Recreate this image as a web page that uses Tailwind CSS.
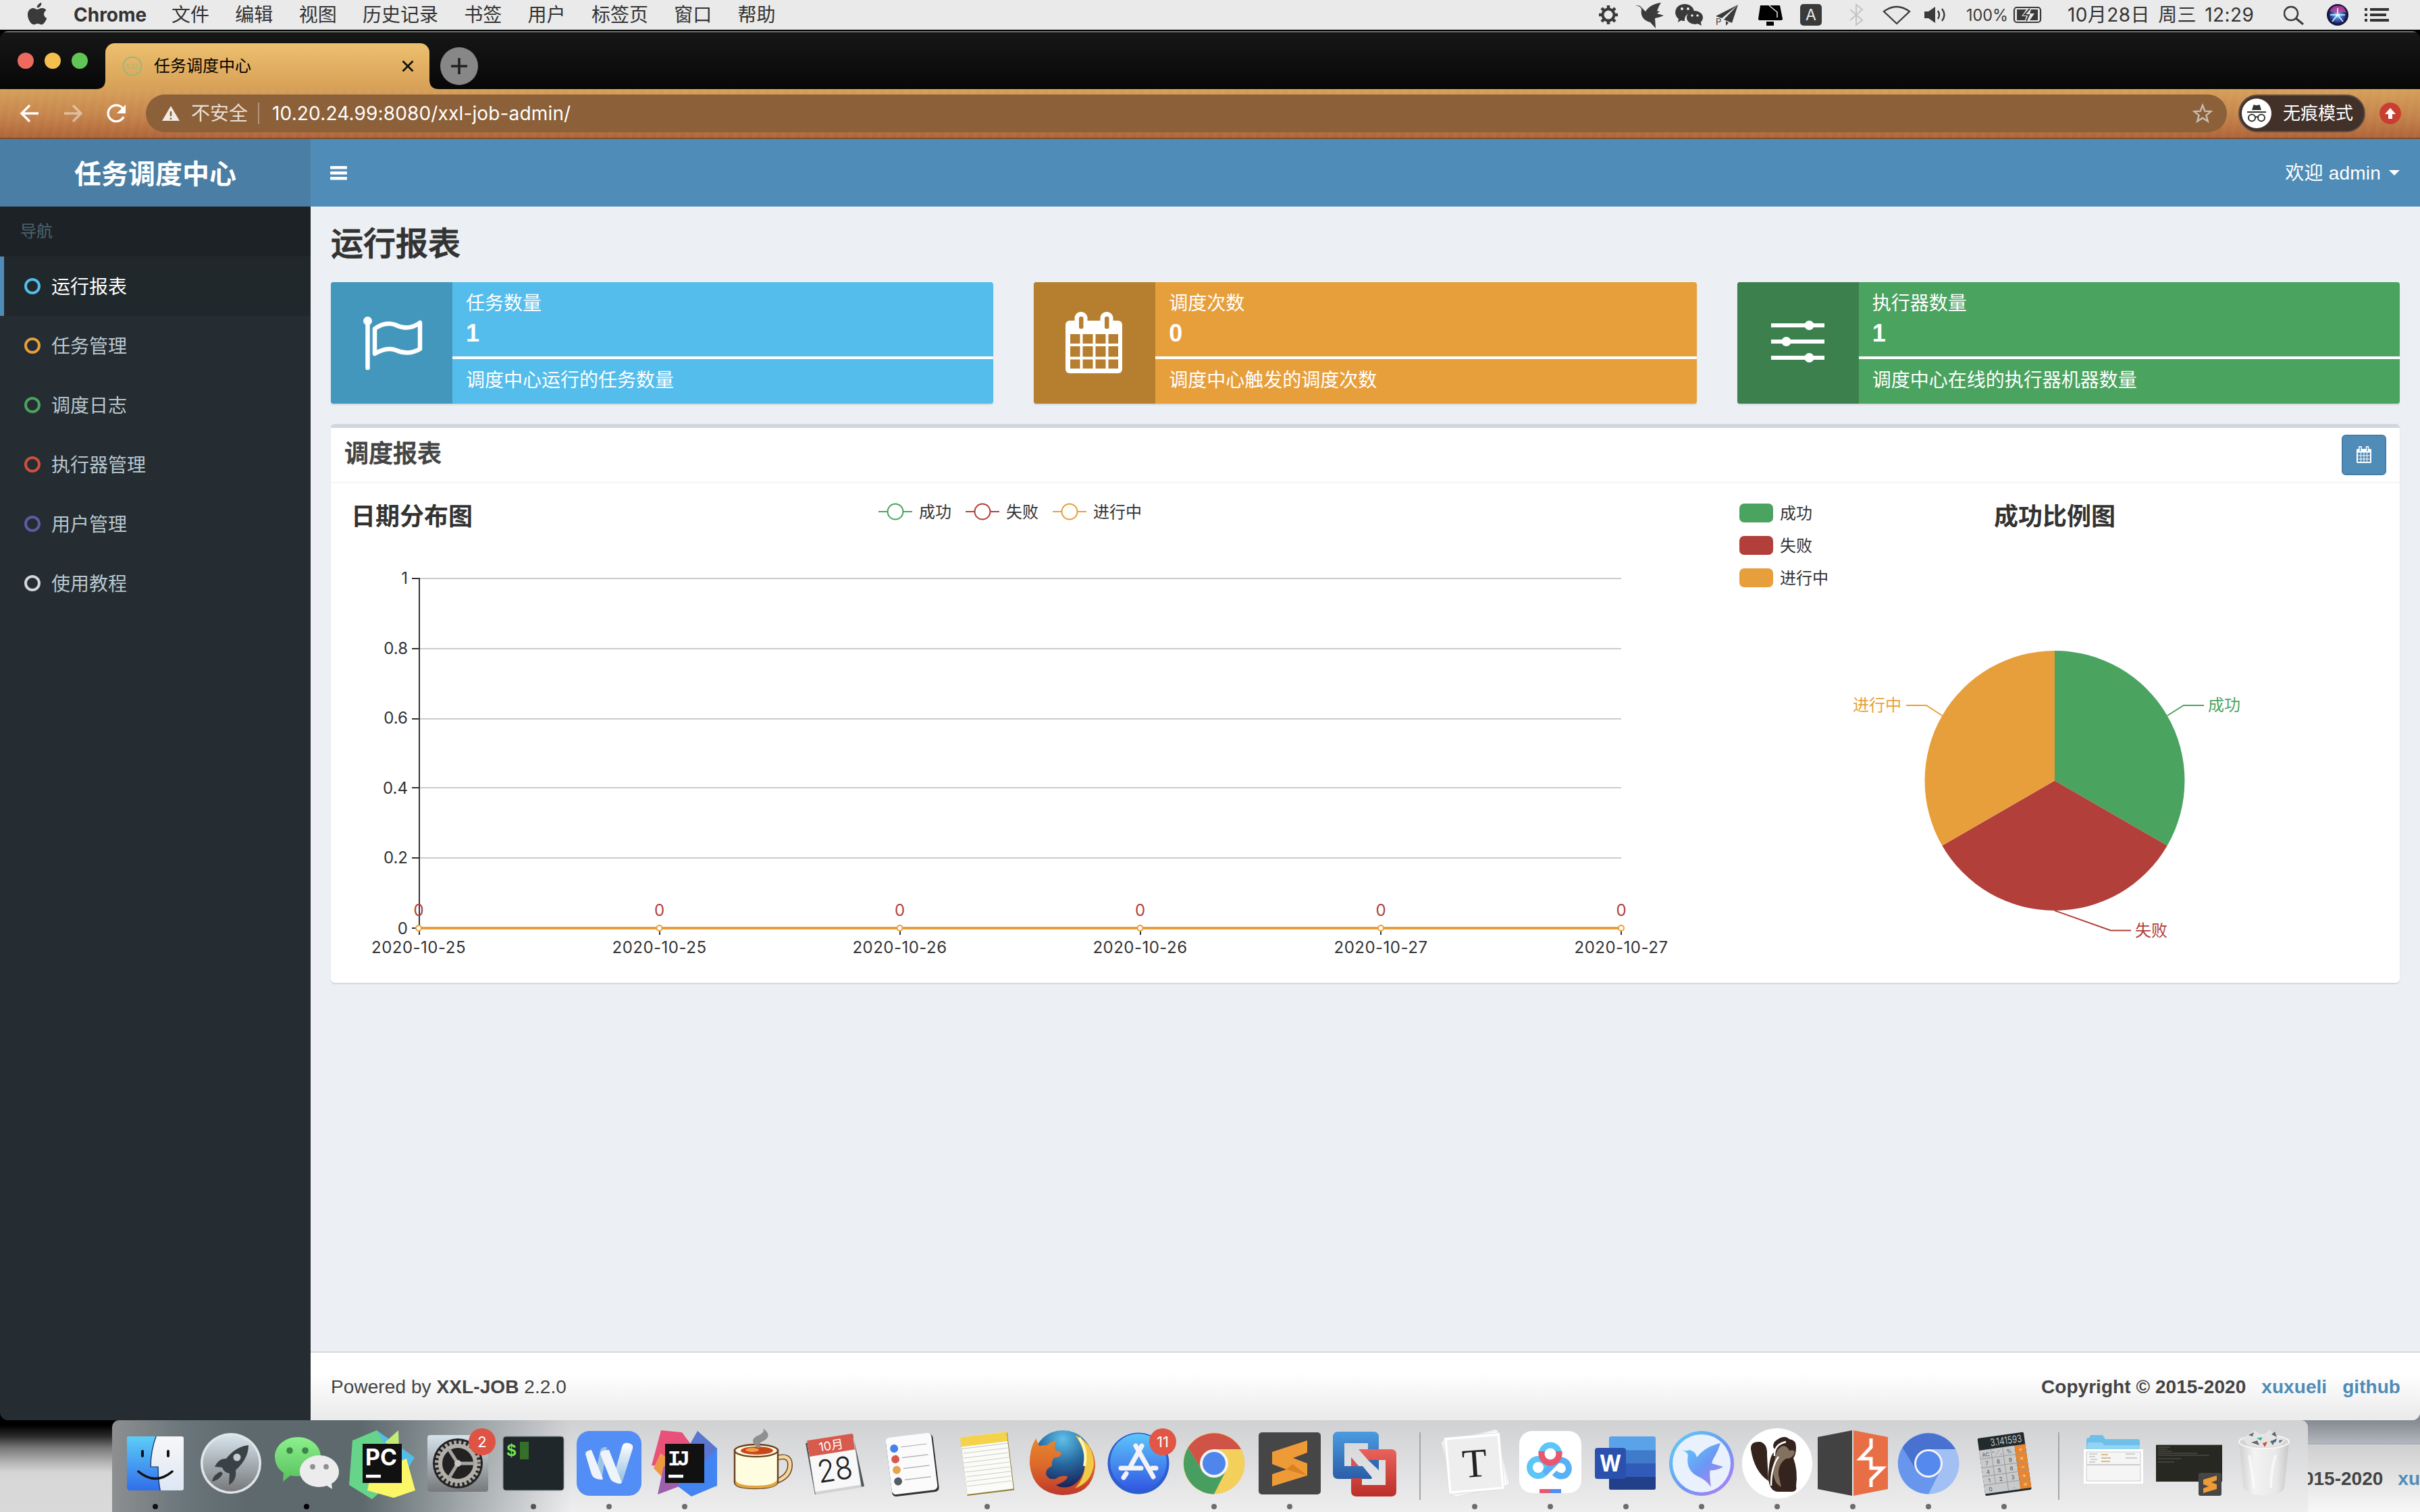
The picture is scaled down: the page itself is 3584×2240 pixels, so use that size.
<!DOCTYPE html>
<html lang="zh-CN">
<head>
<meta charset="utf-8">
<title>任务调度中心</title>
<script src="https://cdn.jsdelivr.net/npm/@tailwindcss/browser@4"></script>
</head>
<body class="m-0">
<div class="relative w-[3584px] h-[2240px] overflow-hidden flex flex-col bg-black font-['Liberation_Sans','Noto_Sans_CJK_SC',sans-serif] text-[28px] leading-[40px]">

  <!-- Desktop visible under the browser window -->
  <div class="absolute left-0 right-0 bottom-0 h-[150px] flex justify-between bg-[#dcdcdc]">
    <div class="w-[400px] h-full bg-[linear-gradient(180deg,#000_0,#000_22px,#2c2c2c_38px,#777_55px,#b8b8b8_78px,#d6d6d6_92px,#dadada_150px)]"></div>
    <div class="w-[400px] h-full flex flex-col">
      <div class="h-[48px] bg-[linear-gradient(180deg,#7d8087,#8c9097_20px,#b3b6bc)]"></div>
      <div class="h-[2px] bg-[#a9adb6]"></div>
      <div class="flex-1 pt-[2px] flex items-center justify-end bg-[linear-gradient(180deg,#cfcfcf,#f8f8f8)] font-bold text-[#444] whitespace-nowrap">
        <span class="mr-[22px]">2015-2020</span><span class="text-[#4f8bb7]">xu</span>
      </div>
    </div>
  </div>

  <!-- macOS menu bar -->
  <header class="relative h-[44px] shrink-0 flex items-center bg-[#eaeaea] text-[#333] text-[28px] font-['Inter','Noto_Sans_CJK_SC',sans-serif] whitespace-nowrap">
    <svg class="ml-[40px] w-[30px] h-[36px]" viewBox="0 0 30 36"><path fill="#3a3a3a" d="M15 10c2 0 4-2 7.500-2 2.500 0 4.600 1.200 6 3.200-5 3-4.300 9.600.8 11.900C28 27 24.700 32.500 21.500 32.500c-2.300 0-3-1.400-5.700-1.400s-3.500 1.400-5.600 1.400C6 32.500 1 25 1 17.800 1 11.500 5 8 9 8c2.600 0 4.500 2 6 2zM14.800 7.600C14.500 4 17.800.6 21.300 0 21.800 4 18.500 7.600 14.800 7.600z"/></svg>
    <span class="ml-[39px] w-[145px] font-bold text-[28px]">Chrome</span>
    <nav class="flex gap-[38.300px] font-normal">
      <span>文件</span><span>编辑</span><span>视图</span><span>历史记录</span><span>书签</span><span>用户</span><span>标签页</span><span>窗口</span><span>帮助</span>
    </nav>
    <svg class="ml-auto w-[664px] h-[44px] shrink-0" viewBox="2360 0 664 44" fill="#3a3a3a">
      <circle cx="2382" cy="22" r="8.500" fill="none" stroke="#3a3a3a" stroke-width="4"/>
      <g stroke="#3a3a3a" stroke-width="4.500"><path d="M2382 8v5M2382 31v5M2368 22h5M2391 22h5M2372 12l3.500 3.500M2388.500 28.500l3.500 3.500M2392 12l-3.500 3.500M2375.500 28.500l-3.500 3.500"/></g>
      <path d="M2422 8c4 0 6 0 8 2l7 7c4-7 13-12 23-13-3 4-4 8-6 12l4 1-4 3 10 3c-4 2-9 3-13 4l1 15-8-9c-9-2-15-9-13-19-1-4-4-5-9-6z"/>
      <path d="M2495 6c8 0 14 5 14 12-8 0-15 5-14 13-2 0-4 0-5-1l-5 3 1-5c-9-7-5-22 9-22z"/><ellipse cx="2510" cy="26" rx="12" ry="10"/><path d="M2512 34l8 4-2-8z"/>
      <g fill="#eaeaea"><circle cx="2491" cy="13" r="2"/><circle cx="2500" cy="13" r="2"/><circle cx="2506" cy="23" r="1.800"/><circle cx="2514" cy="23" r="1.800"/></g>
      <path d="M2574 7l-33 17 9 3zM2574 7l-21 22 12 5zM2556 31v7l4-4z"/><text x="2541" y="37" class="text-[13px]">P</text>
      <path fill="#000" d="M2607 8h29l4 20q0 2-3 2h-30q-3 0-3-2zM2616 32h11v6h-11z"/><path d="M2620 8l12 10v8" fill="none" stroke="#eaeaea" stroke-width="1.500"/>
      <rect x="2666" y="6" width="32" height="32" rx="5"/><text x="2682" y="30" text-anchor="middle" fill="#eaeaea" class="text-[23px]">A</text>
      <path d="M2740 14l18 16-9 7V7l9 7-18 16" fill="none" stroke="#c4c4c4" stroke-width="2"/>
      <path d="M2790 17q19-14 38 0l-19 18z" fill="none" stroke="#3a3a3a" stroke-width="2.200"/>
      <path d="M2850 17h6l10-7v24l-10-7h-6z"/><path d="M2870 16q4 6 0 12M2876 13q7 9 0 18" fill="none" stroke="#3a3a3a" stroke-width="2.400"/>
      <text x="2912" y="31" textLength="62" lengthAdjust="spacingAndGlyphs" class="text-[24px]">100%</text>
      <rect x="2983" y="11" width="39" height="22" rx="4" fill="none" stroke="#3a3a3a" stroke-width="2.200"/><path d="M3024 18q4 4 0 8z"/><path d="M2987 14h14l-7 10h7l-2 6h-12zM3018 30h-12l7-10h-7l2-6h10z"/><path d="M3006 13l-8 9h7l-4 9" fill="none" stroke="#3a3a3a" stroke-width="2"/>
    </svg>
    <span class="ml-[38px] w-[320px] text-[28px] tracking-[0.4px] [word-spacing:4px]">10月28日 周三 12:29</span>
    <svg class="w-[202px] h-[44px] shrink-0" viewBox="3382 0 202 44">
      <circle cx="3393" cy="20" r="10" fill="none" stroke="#3a3a3a" stroke-width="2.500"/><path d="M3400 27l11 9" stroke="#3a3a3a" stroke-width="3"/>
      <defs><radialGradient id="siri"><stop offset="0" stop-color="#fff"/><stop offset=".3" stop-color="#4d9fd8"/><stop offset=".7" stop-color="#3443a8"/><stop offset="1" stop-color="#14143a"/></radialGradient></defs>
      <circle cx="3462" cy="22" r="16" fill="#15153a"/><circle cx="3462" cy="22" r="14" fill="url(#siri)"/><path d="M3450 17q5-12 20-7 4 4 5 9-8-4-13 2-5-5-12-4z" fill="#c9449b" opacity=".8"/><path d="M3454 32l8-10 8 10M3462 22v-10M3451 22h22" stroke="#dff" stroke-width="1.600" fill="none"/>
      <path d="M3502 12h4v4h-4zM3510 12h28v4h-28zM3502 20h4v4h-4zM3510 20h24v4h-24zM3502 28h4v4h-4zM3510 28h28v4h-28z" fill="#333"/>
    </svg>
  </header>

  <!-- Browser window -->
  <main class="relative mt-[2px] h-[2058px] shrink-0 flex flex-col rounded-[12px] overflow-hidden">
    <!-- Tab strip -->
    <div class="h-[86px] shrink-0 flex items-end border-t-2 border-[#6a6e6e] bg-[linear-gradient(180deg,#161616,#111_40%,#070707)]">
      <div class="w-[156px] h-[84px] pl-[26px] flex gap-[16px]">
        <i class="mt-[30px] size-[24px] rounded-full bg-[#ee6a5f]"></i><i class="mt-[30px] size-[24px] rounded-full bg-[#f5bf4f]"></i><i class="mt-[30px] size-[24px] rounded-full bg-[#61c555]"></i>
      </div>
      <div class="relative w-[480px] h-[68px] rounded-t-[14px] bg-[linear-gradient(180deg,#edc070,#e2b062_50%,#d7a058)] flex items-center text-black text-[24px] font-['Inter','Noto_Sans_CJK_SC',sans-serif]">
        <svg class="absolute -left-[14px] bottom-0 w-[508px] h-[14px]" viewBox="0 0 508 14"><path d="M0 14Q14 14 14 0V14zM508 14Q494 14 494 0V14z" fill="#d7a058"/></svg>
        <svg class="ml-[25px] size-[30px]" viewBox="0 0 30 30"><circle cx="15" cy="15" r="13.500" fill="none" stroke="#9ab67c" stroke-width="2"/><text x="15" y="19" text-anchor="middle" fill="#a5b87c" textLength="22" lengthAdjust="spacingAndGlyphs" class="text-[11px] font-['Liberation_Serif',serif]">XXL</text></svg>
        <span class="ml-[17px]">任务调度中心</span>
        <svg class="ml-auto mr-[23px] size-[18px]" viewBox="0 0 18 18"><path d="M1.500 1.500l15 15M16.500 1.500l-15 15" stroke="#111" stroke-width="2.800"/></svg>
      </div>
      <svg class="ml-[16px] mb-[6px] size-[56px]" viewBox="0 0 56 56"><circle cx="28" cy="28" r="28" fill="#878787"/><path d="M28 16v24M16 28h24" stroke="#222" stroke-width="3.600"/></svg>
    </div>
    <!-- Toolbar -->
    <div class="h-[74px] shrink-0 flex items-center border-b-2 border-[#7b4b2c] bg-[repeating-linear-gradient(100deg,#ffffff00_0,#ffffff0a_6px,#ffffff00_14px),linear-gradient(180deg,#d69f58,#c4834a_55%,#af6337)] text-white font-['Inter','Noto_Sans_CJK_SC',sans-serif]">
      <svg class="w-[216px] h-[72px] shrink-0" viewBox="0 0 216 72" fill="none" stroke="#fff" stroke-width="3.400"><path d="M57 36H32M44 24L32 36l12 12"/><g opacity=".45"><path d="M95 36h25M108 24l12 12-12 12"/></g><path d="M182 29a12 12 0 1 0 1 12"/><path d="M186 23v13h-13z" fill="#fff" stroke="none"/></svg>
      <div class="w-[3082px] h-[56px] rounded-full bg-[#8c6038] flex items-center">
        <svg class="ml-[24px] w-[26px] h-[22px]" viewBox="0 0 26 22"><path d="M13 0l13 22H0z" fill="#f0ebe4"/><path d="M13 8v7M13 17.500v2.500" stroke="#8c6038" stroke-width="2.600"/></svg>
        <span class="ml-[17px] text-[#eadfd3]">不安全</span>
        <i class="ml-[15px] w-[2px] h-[32px] bg-[#b3977d]"></i>
        <span class="ml-[19px] tracking-[0.150px]">10.20.24.99:8080/xxl-job-admin/</span>
        <svg class="ml-auto mr-[21px] size-[30px]" viewBox="0 0 30 30"><path d="M15 3l3.400 8.600 9.100.5-7.100 5.800 2.400 8.900L15 21.800l-7.800 5 2.400-8.900-7.100-5.800 9.100-.5z" fill="none" stroke="#c9beb4" stroke-width="2.400"/></svg>
      </div>
      <div class="ml-[17px] w-[188px] h-[56px] rounded-full bg-[#423129] border-2 border-[#5d5049] flex items-center text-[26px]">
        <svg class="ml-[3px] size-[44px]" viewBox="0 0 44 44"><circle cx="22" cy="22" r="22" fill="#fff"/><path d="M15 17l2.500-8q4.500 2 9 0L29 17z" fill="#333"/><path d="M8 20h28" stroke="#333" stroke-width="2"/><g fill="none" stroke="#333" stroke-width="2"><circle cx="15" cy="28.500" r="5"/><circle cx="29" cy="28.500" r="5"/><path d="M20 28q2-2 4 0"/></g></svg>
        <span class="ml-[17px]">无痕模式</span>
      </div>
      <svg class="ml-[21px] size-[32px]" viewBox="0 0 32 32"><circle cx="16" cy="16" r="16" fill="#ca3e31"/><path d="M16 8l8 9h-5v7h-6v-7H8z" fill="#fff"/></svg>
    </div>

    <!-- App header -->
    <div class="h-[100px] shrink-0 flex text-white">
      <div class="w-[460px] h-full pt-[3px] flex items-center justify-center bg-[#4a7ea4] text-[40px] font-bold">任务调度中心</div>
      <div class="flex-1 flex items-center justify-between bg-[#508cb8] pl-[29px] pr-[30px]">
        <svg class="w-[25px] h-[21px]" viewBox="0 0 25 21" fill="#fff"><rect width="25" height="4.600" rx="1"/><rect y="8" width="25" height="4.600" rx="1"/><rect y="16" width="25" height="4.600" rx="1"/></svg>
        <div class="flex items-center gap-[12px]"><span class="pt-[2px] tracking-[0.200px]">欢迎 admin</span><svg class="w-[16px] h-[8px]" viewBox="0 0 16 8"><path d="M0 0h16L8 8z" fill="#fff"/></svg></div>
      </div>
    </div>

    <div class="flex-1 min-h-0 flex">
      <!-- Sidebar -->
      <aside class="w-[460px] bg-[#252c32] text-[#b8c7ce]">
        <div class="h-[74px] flex items-center pl-[30px] bg-[#1d2226] text-[24px] text-[#4d626d]">导航</div>
        <div class="h-[88px] flex items-center pl-[30px] gap-[16px] border-l-[6px] border-[#508cb8] bg-[#20282b] text-white"><i class="size-[24px] rounded-full border-[4px] border-[#54bdeb]"></i><span class="pt-[3px]">运行报表</span></div>
        <div class="h-[88px] flex items-center pl-[36px] gap-[16px]"><i class="size-[24px] rounded-full border-[4px] border-[#e79f3c]"></i><span class="pt-[3px]">任务管理</span></div>
        <div class="h-[88px] flex items-center pl-[36px] gap-[16px]"><i class="size-[24px] rounded-full border-[4px] border-[#4ba360]"></i><span class="pt-[3px]">调度日志</span></div>
        <div class="h-[88px] flex items-center pl-[36px] gap-[16px]"><i class="size-[24px] rounded-full border-[4px] border-[#cb513e]"></i><span class="pt-[3px]">执行器管理</span></div>
        <div class="h-[88px] flex items-center pl-[36px] gap-[16px]"><i class="size-[24px] rounded-full border-[4px] border-[#5d5ca3]"></i><span class="pt-[3px]">用户管理</span></div>
        <div class="h-[88px] flex items-center pl-[36px] gap-[16px]"><i class="size-[24px] rounded-full border-[4px] border-[#d3d6dd]"></i><span class="pt-[3px]">使用教程</span></div>
      </aside>

      <!-- Page content -->
      <section class="flex-1 flex flex-col bg-[#eceff4]">
        <div class="px-[30px] flex-1 flex flex-col">
          <h1 class="h-[112px] flex items-center text-[48px] font-medium text-[#333] [-webkit-text-stroke:1px_#333]">运行报表</h1>
          <div class="grid grid-cols-3 gap-[60px] text-white">
            <div class="h-[180px] flex rounded-[4px] overflow-hidden bg-[#54bdeb] shadow-[0_2px_2px_rgba(0,0,0,0.1)]">
              <div class="w-[180px] bg-[#4497bc]"><svg class="size-[180px]" viewBox="0 0 180 180" fill="none" stroke="#fff"><path d="M54.500 58V127" stroke-width="6.500" stroke-linecap="round"/><ellipse cx="54.500" cy="57.500" rx="6.500" ry="6.500" fill="#fff" stroke="none"/><path d="M65 69q15-11 30-6 20 10 37-3v39q-17 10-35 2-14-6-32 5z" stroke-width="6.500" stroke-linejoin="round"/></svg></div>
              <div class="flex-1 flex flex-col"><div class="h-[110px] pl-[20px] pt-[12px]"><p>任务数量</p><p class="mt-[4px] text-[36px] font-bold">1</p></div><div class="h-[4px] bg-white"></div><p class="pl-[20px] pt-[12px]">调度中心运行的任务数量</p></div>
            </div>
            <div class="h-[180px] flex rounded-[4px] overflow-hidden bg-[#e79f3c] shadow-[0_2px_2px_rgba(0,0,0,0.1)]">
              <div class="w-[180px] bg-[#b67e2f]"><svg class="size-[180px]" viewBox="0 0 180 180"><rect x="47" y="57" width="84" height="78" rx="6" fill="#fff"/><rect x="60.500" y="44" width="19" height="30" rx="9" fill="#fff"/><rect x="98.500" y="44" width="19" height="30" rx="9" fill="#fff"/><g fill="#b67e2f"><rect x="67" y="51" width="6.500" height="18" rx="2.500"/><rect x="105" y="51" width="6.500" height="18" rx="2.500"/><path d="M54 77h14.500v14H54zM72.500 77h15v14h-15zM91.500 77h15v14h-15zM110.500 77H125v14h-14.500zM54 95h14.500v15.500H54zM72.500 95h15v15.500h-15zM91.500 95h15v15.500h-15zM110.500 95H125v15.500h-14.500zM54 114.500h14.500V128H54zM72.500 114.500h15V128h-15zM91.500 114.500h15V128h-15zM110.500 114.500H125V128h-14.500z"/></g></svg></div>
              <div class="flex-1 flex flex-col"><div class="h-[110px] pl-[20px] pt-[12px]"><p>调度次数</p><p class="mt-[4px] text-[36px] font-bold">0</p></div><div class="h-[4px] bg-white"></div><p class="pl-[20px] pt-[12px]">调度中心触发的调度次数</p></div>
            </div>
            <div class="h-[180px] flex rounded-[4px] overflow-hidden bg-[#4ba360] shadow-[0_2px_2px_rgba(0,0,0,0.1)]">
              <div class="w-[180px] bg-[#3c814d]"><svg class="size-[180px]" viewBox="0 0 180 180" fill="#fff"><path d="M50 61h79v6H50zM50 85h79v6H50zM50 109h79v6H50z"/><circle cx="106.500" cy="64" r="7"/><circle cx="72.500" cy="88" r="7"/><circle cx="106.500" cy="112" r="7"/></svg></div>
              <div class="flex-1 flex flex-col"><div class="h-[110px] pl-[20px] pt-[12px]"><p>执行器数量</p><p class="mt-[4px] text-[36px] font-bold">1</p></div><div class="h-[4px] bg-white"></div><p class="pl-[20px] pt-[12px]">调度中心在线的执行器机器数量</p></div>
            </div>
          </div>

          <div class="mt-[30px] h-[828px] rounded-[6px] border-t-[6px] border-[#d2d6de] bg-white shadow-[0_2px_2px_rgba(0,0,0,0.1)]">
            <div class="h-[82px] flex items-center justify-between pl-[20px] pr-[20px] border-b-2 border-[#f4f4f4]">
              <h3 class="-mt-[3px] text-[36px] font-medium text-[#444] [-webkit-text-stroke:0.800px_#444]">调度报表</h3>
              <button class="w-[66px] h-[60px] flex items-center justify-center rounded-[6px] border-2 border-[#467ea8] bg-[#508cb8]"><svg class="w-[22px] h-[26px]" viewBox="0 0 22 26"><rect y="4" width="22" height="21" rx="1.500" fill="#fff"/><path d="M5.500 0v8M16 0v8" stroke="#fff" stroke-width="4.500"/><path d="M5.500 1.500v6M16 1.500v6" stroke="#508cb8" stroke-width="1.500"/><path d="M2 9.500h4v4H2zM7 9.500h3.500v4H7zM11.500 9.500H15v4h-3.500zM16 9.500h4v4h-4zM2 14.500h4v4H2zM7 14.500h3.500v4H7zM11.500 14.500H15v4h-3.500zM16 14.500h4v4h-4zM2 19.500h4v3.500H2zM7 19.500h3.500v3.500H7zM11.500 19.500H15v3.500h-3.500zM16 19.500h4v3.500h-4z" fill="#508cb8"/></svg></button>
            </div>
            <!-- Charts -->
            <svg class="block w-[3064px] h-[738px] font-['Inter','Noto_Sans_CJK_SC',sans-serif] text-[24px]" viewBox="490 716 3064 738" fill="#333">
              <text x="520" y="778" class="text-[36px] font-bold">日期分布图</text>
              <g fill="none" stroke-width="2"><path d="M1301 758h50" stroke="#4ba360"/><path d="M1430 758h50" stroke="#b23f39"/><path d="M1559 758h50" stroke="#e79f3c"/></g>
              <g fill="#fff" stroke-width="2"><circle cx="1326" cy="758" r="11.500" stroke="#4ba360"/><circle cx="1455" cy="758" r="11.500" stroke="#b23f39"/><circle cx="1584" cy="758" r="11.500" stroke="#e79f3c"/></g>
              <text x="1361" y="767">成功</text><text x="1490" y="767">失败</text><text x="1619" y="767">进行中</text>
              <path d="M621 857H2401M621 961H2401M621 1065H2401M621 1167H2401M621 1271H2401" stroke="#ccc" stroke-width="2"/>
              <path d="M621 856V1385M610 857h11M610 961h11M610 1065h11M610 1167h11M610 1271h11M610 1375h11M977 1375v10M1333 1375v10M1689 1375v10M2045 1375v10M2401 1375v10" stroke="#333" stroke-width="2"/>
              <g text-anchor="end"><text x="604" y="865">1</text><text x="604" y="969">0.8</text><text x="604" y="1072">0.6</text><text x="604" y="1176">0.4</text><text x="604" y="1279">0.2</text><text x="604" y="1384">0</text></g>
              <path d="M620 1375H2401" stroke="#e79f3c" stroke-width="4"/>
              <g fill="#fff" stroke="#e79f3c" stroke-width="2"><circle cx="620" cy="1375" r="4"/><circle cx="976.500" cy="1375" r="4"/><circle cx="1332.500" cy="1375" r="4"/><circle cx="1688.500" cy="1375" r="4"/><circle cx="2045" cy="1375" r="4"/><circle cx="2401" cy="1375" r="4"/></g>
              <g text-anchor="middle" fill="#b23f39"><text x="620" y="1357">0</text><text x="976.500" y="1357">0</text><text x="1332.500" y="1357">0</text><text x="1688.500" y="1357">0</text><text x="2045" y="1357">0</text><text x="2401" y="1357">0</text></g>
              <g text-anchor="middle" class="tracking-[0.500px]"><text x="620" y="1412">2020-10-25</text><text x="976.500" y="1412">2020-10-25</text><text x="1332.500" y="1412">2020-10-26</text><text x="1688.500" y="1412">2020-10-26</text><text x="2045" y="1412">2020-10-27</text><text x="2401" y="1412">2020-10-27</text></g>
              <rect x="2576" y="746" width="50" height="28" rx="7" fill="#4ba360"/><rect x="2576" y="794" width="50" height="28" rx="7" fill="#b23f39"/><rect x="2576" y="842" width="50" height="28" rx="7" fill="#e79f3c"/>
              <text x="2636" y="769">成功</text><text x="2636" y="817">失败</text><text x="2636" y="865">进行中</text>
              <text x="3043" y="778" text-anchor="middle" class="text-[36px] font-bold">成功比例图</text>
              <path d="M3043 1156.500V964a192.500 192.500 0 0 1 166.700 288.750z" fill="#4ba360"/>
              <path d="M3043 1156.500L3209.700 1252.750a192.500 192.500 0 0 1-333.400 0z" fill="#b23f39"/>
              <path d="M3043 1156.500L2876.300 1252.750A192.500 192.500 0 0 1 3043 964z" fill="#e79f3c"/>
              <g fill="none" stroke-width="2"><path d="M3210 1060l24-15h30" stroke="#4ba360"/><path d="M2876 1060l-23-15h-30" stroke="#e79f3c"/><path d="M3043 1349l83 29.500h30" stroke="#b23f39"/></g>
              <text x="3270" y="1053" fill="#4ba360">成功</text><text x="2744" y="1053" fill="#e79f3c">进行中</text><text x="3162" y="1387" fill="#b23f39">失败</text>
            </svg>
          </div>
        </div>
        <footer class="h-[102px] shrink-0 px-[30px] pt-[1px] flex items-center justify-between border-t-2 border-[#d2d6de] bg-[linear-gradient(180deg,#fff_30%,#eaeaea)] text-[#444]">
          <div class="tracking-[0.080px]">Powered by <b>XXL-JOB</b> 2.2.0</div>
          <div class="flex font-bold tracking-[0.050px]"><span>Copyright © 2015-2020</span><span class="ml-[23px] text-[#4f8bb7]">xuxueli</span><span class="ml-[23px] -mr-[1px] text-[#4f8bb7]">github</span></div>
        </footer>
      </section>
    </div>
  </main>

  <!-- Dock -->
  <div class="absolute left-[166px] bottom-0 w-[3252px] h-[136px] px-[8px] flex rounded-t-[10px] overflow-hidden bg-[linear-gradient(90deg,#8d8f90_0px,#69757a_110px,#5d696d_200px,#5d696d_370px,#5d696d00_680px),linear-gradient(180deg,#d0d1d3,#eeeeef)] font-['Inter','Noto_Sans_CJK_SC',sans-serif]">
    <!-- Finder -->
    <svg class="w-[112px] h-[136px]" viewBox="0 0 112 136"><defs><linearGradient id="fn" x2="0" y2="1"><stop stop-color="#5ccdf8"/><stop offset="1" stop-color="#316eea"/></linearGradient><linearGradient id="fw" x2="0" y2="1"><stop stop-color="#f7f7f8"/><stop offset="1" stop-color="#dde7f4"/></linearGradient></defs><rect x="14" y="24" width="84" height="80" rx="3" fill="url(#fw)"/><path d="M17 24h41q-8 20-8 45h11q0 20 3 35H17q-3 0-3-3V27q0-3 3-3z" fill="url(#fn)"/><path d="M57 24q-8 22-8 45h11q0 20 3 35" fill="none" stroke="#1d3560" stroke-width="1.200"/><path d="M37 46v7M75 46v7" stroke="#111" stroke-width="4" stroke-linecap="round"/><path d="M31 76q25 21 50 0" fill="none" stroke="#111" stroke-width="3.500" stroke-linecap="round"/><circle cx="56" cy="128" r="4" fill="#111"/></svg>
    <!-- Launchpad -->
    <svg class="w-[112px] h-[136px]" viewBox="0 0 112 136"><defs><linearGradient id="lp" x2="0" y2="1"><stop stop-color="#d6e3eb"/><stop offset="1" stop-color="#77797b"/></linearGradient></defs><circle cx="56" cy="64" r="45" fill="#dfe5e8"/><circle cx="56" cy="64" r="41.500" fill="url(#lp)"/><path d="M82 37q-19 2-33 20-11-1-17 12l11 1q2 7 11 9l-1 17q12-7 10-22 19-17 19-37zM41 76q-11 4-13 15 12-3 16-12z" fill="#3a4247"/><circle cx="65" cy="55" r="5.500" fill="#c5ccd0"/></svg>
    <!-- WeChat -->
    <svg class="w-[112px] h-[136px]" viewBox="0 0 112 136"><defs><linearGradient id="wc" x2="0" y2="1"><stop stop-color="#8cf08c"/><stop offset="1" stop-color="#57c15e"/></linearGradient></defs><path d="M43 25c19 0 34 13 34 29S62 83 43 83q-6 0-11-1l-11 9 1-13C13 72 9 63 9 54c0-16 15-29 34-29z" fill="url(#wc)"/><circle cx="31" cy="45" r="4.800" fill="#3b8645"/><circle cx="54" cy="45" r="4.800" fill="#3b8645"/><path d="M75 52c16 0 29 11 29 24 0 8-4 14-11 18l1 8-8-5q-5 2-11 2c-16 0-29-10-29-23s13-24 29-24z" fill="#ececec"/><circle cx="65" cy="69" r="3.900" fill="#909090"/><circle cx="85" cy="69" r="3.900" fill="#909090"/><circle cx="56" cy="128" r="4" fill="#000"/></svg>
    <!-- PyCharm -->
    <svg class="w-[112px] h-[136px]" viewBox="0 0 112 136"><path d="M12 30L48 15l22 18 10 50-39 34L7 96z" fill="#66d58a"/><path d="M48 15l56 40-18 30z" fill="#55bce8"/><path d="M60 33l20-18 1 28z" fill="#c3ec74"/><path d="M92 57l13 47-32 11-39-11 6-27z" fill="#fcf767"/><rect x="27" y="35" width="58" height="58" fill="#111"/><text x="31" y="67" fill="#fff" textLength="47" lengthAdjust="spacingAndGlyphs" class="text-[34px] font-bold">PC</text><path d="M32 83h22" stroke="#fff" stroke-width="4.500"/></svg>
    <!-- System preferences -->
    <svg class="w-[112px] h-[136px]" viewBox="0 0 112 136"><rect x="11" y="22" width="90" height="84" rx="4" fill="url(#lp)"/><circle cx="56" cy="64" r="37" fill="#222"/><circle cx="56" cy="64" r="31" fill="none" stroke="#aaa6a0" stroke-width="6" stroke-dasharray="4 3"/><circle cx="56" cy="64" r="26" fill="none" stroke="#b3afaa" stroke-width="6"/><path d="M56 64h26M56 64L42 42M56 64L42 87" stroke="#a9a5a0" stroke-width="5"/><circle cx="56" cy="64" r="5" fill="#c9c6c2"/><circle cx="92" cy="32" r="20" fill="#df5345"/><text x="92" y="40" text-anchor="middle" fill="#fff" class="text-[22px]">2</text></svg>
    <!-- Terminal -->
    <svg class="w-[112px] h-[136px]" viewBox="0 0 112 136"><rect x="11" y="24" width="90" height="80" rx="4" fill="#20272a" stroke="#8b9599" stroke-width="1"/><text x="16" y="53" fill="#6fe84f" class="text-[25px] font-bold font-['Liberation_Mono',monospace]">$</text><rect x="36" y="32" width="13" height="26" fill="#35702a"/><circle cx="56" cy="128" r="4" fill="#555"/></svg>
    <!-- Document writer -->
    <svg class="w-[112px] h-[136px]" viewBox="0 0 112 136"><defs><linearGradient id="ws" x2="0" y2="1"><stop stop-color="#fff"/><stop offset="1" stop-color="#8fbde0"/></linearGradient></defs><rect x="8" y="16" width="96" height="96" rx="19" fill="#538df6"/><path d="M35 83l8-38q2-6 10-5L45 88z" fill="#9cc4e4"/><path d="M62 86l13-46q2-8 10-6t6 8L76 90q-2 5-8 4z" fill="url(#ws)"/><path d="M21 50q0-5 9-6l16 40q2 4-1 4-12 0-15-8zM43 50q0-6 13-6l18 46q2 4-2 4-12-1-15-9z" fill="#eff4fb"/><circle cx="56" cy="128" r="4" fill="#6d6d6d"/></svg>
    <!-- IntelliJ -->
    <svg class="w-[112px] h-[136px]" viewBox="0 0 112 136"><path d="M7 67L21 15l31 3 30 40-60 10z" fill="#e8517a"/><path d="M10 71l10-22 30 20-23 20z" fill="#ec9845"/><path d="M16 110l9-42 50 20z" fill="#9c5fab"/><path d="M75 16l29 26v55l-38 16-20-15 20-40z" fill="#4284f2"/><path d="M75 16l29 26-32 30-12-30z" fill="#5a76cf"/><rect x="27" y="35" width="58" height="58" fill="#111"/><text x="31" y="67" fill="#fff" textLength="33" class="text-[32px] font-bold font-['Liberation_Mono',monospace]">IJ</text><path d="M32 83h22" stroke="#fff" stroke-width="4.500"/><circle cx="56" cy="128" r="4" fill="#6d6d6d"/></svg>
    <!-- Coffee -->
    <svg class="w-[112px] h-[136px]" viewBox="0 0 112 136"><path d="M80 56q20-6 20 10 0 18-22 25" fill="none" stroke="#6b431f" stroke-width="8"/><path d="M80 56q20-6 20 10 0 18-22 25" fill="none" stroke="#f4d7a0" stroke-width="5"/><path d="M18 44v48q0 9 30 9t34-9V44z" fill="#fffde0" stroke="#6b431f" stroke-width="2.500"/><path d="M19 88q2 9 30 9t32-9v5q-2 8-32 8t-30-8z" fill="#dfa643"/><ellipse cx="50" cy="45" rx="32" ry="9" fill="#fff7df" stroke="#6b431f" stroke-width="2.500"/><ellipse cx="51" cy="45" rx="24" ry="6" fill="#c94619"/><ellipse cx="44" cy="44" rx="10" ry="3" fill="#eaa145"/><path d="M52 41q-14-12 0-18 12-5 8-11 14 10 2 18-12 5-4 10z" fill="#8f8f8f"/></svg>
    <!-- Calendar -->
    <svg class="w-[112px] h-[136px]" viewBox="0 0 112 136"><path d="M11 34l70-13 17 77-73 12z" fill="#4d575b"/><g transform="rotate(-9 56 64)"><rect x="19" y="31" width="69" height="74" fill="#d2d2d0"/><rect x="19" y="29" width="68" height="72" fill="#f8f8f8"/><rect x="19" y="24" width="68" height="24" fill="#d75a4d"/><text x="53" y="43" text-anchor="middle" fill="#fff" class="text-[18px]">10月</text><text x="53" y="89" text-anchor="middle" fill="#222" textLength="52" lengthAdjust="spacingAndGlyphs" class="text-[46px] font-light">28</text></g></svg>
    <!-- Reminders -->
    <svg class="w-[112px] h-[136px]" viewBox="0 0 112 136"><g transform="rotate(-7 56 64)"><rect x="22" y="24" width="70" height="86" rx="6" fill="#333"/><rect x="22" y="22" width="68" height="85" rx="6" fill="#fbfbfb"/><circle cx="33" cy="39" r="6" fill="#4681ea"/><circle cx="33" cy="55" r="6" fill="#d8594b"/><circle cx="33" cy="71" r="6" fill="#e6a44e"/><circle cx="33" cy="88" r="6" fill="#555c66"/><path d="M43 38h39M43 54h39M43 70h39M43 87h39" stroke="#aaa" stroke-width="1.200"/></g></svg>
    <!-- Notes -->
    <svg class="w-[112px] h-[136px]" viewBox="0 0 112 136"><g transform="rotate(-7 56 64)"><rect x="21" y="22" width="70" height="86" fill="#8f7d38"/><rect x="21" y="21" width="69" height="85" fill="#fbfbf7"/><rect x="21" y="21" width="69" height="14" fill="#f4d34b"/><path d="M22 38h67" stroke="#888" stroke-dasharray="1 1"/><path d="M22 45h67M22 52h67M22 59h67M22 66h67M22 73h67M22 80h67M22 87h67M22 94h67" stroke="#ccc"/></g><circle cx="56" cy="128" r="4" fill="#6d6d6d"/></svg>
    <!-- Firefox -->
    <svg class="w-[112px] h-[136px]" viewBox="0 0 112 136"><defs><radialGradient id="ff" cx=".5" cy=".15" r=".85"><stop stop-color="#5fc0e8"/><stop offset=".5" stop-color="#26689f"/><stop offset="1" stop-color="#1a1b50"/></radialGradient><linearGradient id="fx" x2="0" y2="1"><stop stop-color="#e98a2c"/><stop offset=".5" stop-color="#dd6a2b"/><stop offset="1" stop-color="#bd382b"/></linearGradient></defs><circle cx="56" cy="59" r="44" fill="url(#ff)"/><path d="M16 27l5 11q7-1 12-1 5-5 13-7-3 8-1 15 8 0 9 5-2 5-11 6-4 4-3 12-9 3-9 12 4 9 14 7 8-6 18-4 0 7-17 13 8 6 22 2 20-9 22-38-1-22-14-38 29 17 28 47-4 42-49 42Q12 108 7 66q-1-22 9-39z" fill="url(#fx)"/><path d="M74 22q27 12 28 43-3 27-28 36 14-14 15-36-1-26-15-43z" fill="#f3ca45"/><path d="M80 26q13 17 8 42" fill="none" stroke="#fff6b5" stroke-width="4"/></svg>
    <!-- App Store -->
    <svg class="w-[112px] h-[136px]" viewBox="0 0 112 136"><defs><linearGradient id="as" x2="0" y2="1"><stop stop-color="#5ec5fa"/><stop offset="1" stop-color="#3157e4"/></linearGradient></defs><circle cx="56" cy="64" r="45.500" fill="#2c5ed1"/><circle cx="56" cy="62" r="42" fill="url(#as)"/><g stroke="#f3f3f5" stroke-width="7" stroke-linecap="round"><path d="M30 71h30M76 71h6M61 38L45 67M52 38l26 46M38 79l-4 6"/></g><circle cx="92" cy="32" r="20" fill="#e25648"/><text x="92" y="40" text-anchor="middle" fill="#fff" class="text-[22px]">11</text></svg>
    <!-- Chrome -->
    <svg class="w-[112px] h-[136px]" viewBox="0 0 112 136"><circle cx="56" cy="64" r="45.500" fill="#f3cf5c"/><path d="M17.500 40.500A45.500 45.500 0 0 0 56 109.500L74 74 56 64l-18 10z" fill="#489e61"/><path d="M17.500 40.500L38 74l18-31h40A45.500 45.500 0 0 0 17.500 40.500z" fill="#cf5347"/><circle cx="56" cy="64" r="21" fill="#f4f4f4"/><circle cx="56" cy="64" r="17" fill="#4f86ec"/><circle cx="56" cy="128" r="4" fill="#6d6d6d"/></svg>
    <!-- Sublime Text -->
    <svg class="w-[112px] h-[136px]" viewBox="0 0 112 136"><rect x="10" y="18" width="92" height="92" rx="5" fill="#464646"/><path d="M30 47l52-17v18L61 56l21 8v18L30 98V80l21-7-21-8z" fill="#ee9b37"/><path d="M51 73l31 9-22-17z" fill="#d98224"/><circle cx="56" cy="128" r="4" fill="#6d6d6d"/></svg>
    <!-- VMware Fusion -->
    <svg class="w-[112px] h-[136px]" viewBox="0 0 112 136"><defs><linearGradient id="vb" x2="0" y2="1"><stop stop-color="#4a9be0"/><stop offset="1" stop-color="#2b5da8"/></linearGradient><linearGradient id="vr" x2="0" y2="1"><stop stop-color="#e9625c"/><stop offset="1" stop-color="#bb2f28"/></linearGradient></defs><path d="M16 17h52q8 0 8 8v49L60 52V34H25v34h27l14 17-1 2H16q-8 0-8-8V25q0-8 8-8z" fill="url(#vb)"/><path d="M46 43h48q8 0 8 8v54q0 8-8 8H43q-8 0-8-8V86h16v10h35V59H60z" fill="url(#vr)"/><path d="M60 59l16 15V59zM35 68V55l11 13z" fill="#2f6ab8"/><path d="M35 68V55l11 13z" fill="#e0524e"/></svg>
    <div class="w-[50px] flex items-center justify-center"><i class="w-[2px] h-[100px] bg-[#a5a6a7]"></i></div>
    <!-- Typora -->
    <svg class="w-[112px] h-[136px]" viewBox="0 0 112 136"><g stroke="#d9d9d9" stroke-width=".8" fill="#fff"><rect x="15" y="22" width="84" height="84" transform="rotate(-13 56 64)"/><rect x="15" y="22" width="83" height="83" transform="rotate(-10 56 64)"/><rect x="14" y="22" width="83" height="84" transform="rotate(-5 56 64)"/></g><rect x="18" y="26" width="75" height="76" fill="#eee" transform="rotate(-5 56 64)"/><text x="56" y="84" text-anchor="middle" fill="#222" transform="rotate(-4 56 64)" class="text-[60px] font-['Liberation_Serif',serif]">T</text><circle cx="56" cy="128" r="4" fill="#6d6d6d"/></svg>
    <!-- Baidu netdisk -->
    <svg class="w-[112px] h-[136px]" viewBox="0 0 112 136"><rect x="10" y="16" width="92" height="92" rx="19" fill="#fff"/><g fill="none" stroke-width="9"><circle cx="38" cy="70" r="12.500" stroke="#5cc6f6"/><path d="M62 78q8 8 17 3a12.500 12.500 0 0 0-13-21L47 79" stroke="#58b0f5"/><path d="M43 50a13 13 0 0 1 26 0" stroke="#5cc6f6"/><path d="M43 46v4a13 13 0 0 0 26 0v-4" stroke="#e9566f"/></g><path d="M40 102h16v6H40z" fill="#e9566f"/><path d="M56 102h16v6H56z" fill="#4e8df4"/><circle cx="56" cy="128" r="4" fill="#6d6d6d"/></svg>
    <!-- Word -->
    <svg class="w-[112px] h-[136px]" viewBox="0 0 112 136"><rect x="31" y="24" width="69" height="79" rx="3" fill="#5ba3e8"/><path d="M31 44.500h69V64H31z" fill="#407bcb"/><path d="M31 64h69v20H31z" fill="#315bb8"/><path d="M31 84h69v16q0 3-3 3H34q-3 0-3-3z" fill="#223f8a"/><rect x="10" y="41" width="46" height="46" rx="4" fill="#2a51ae"/><text x="33" y="76" text-anchor="middle" fill="#fff" textLength="32" lengthAdjust="spacingAndGlyphs" class="text-[34px] font-bold">W</text><circle cx="56" cy="128" r="4" fill="#6d6d6d"/></svg>
    <!-- Hummingbird -->
    <svg class="w-[112px] h-[136px]" viewBox="0 0 112 136"><defs><linearGradient id="hb" x2="1" y2="1"><stop stop-color="#5fd0fb"/><stop offset=".55" stop-color="#6c97f4"/><stop offset="1" stop-color="#bc7af5"/></linearGradient></defs><circle cx="56" cy="64" r="48" fill="url(#hb)"/><circle cx="56" cy="64" r="43" fill="#e9f1fd"/><path d="M20 42q14 5 18 2 9 2 11 11 12-16 35-21-4 13-11 24l-2 6 17 5q-9 6-19 5-2 5 1 25-8-11-20-16-18-9-14-31-2-7-16-10z" fill="url(#hb)"/><circle cx="56" cy="128" r="4" fill="#6d6d6d"/></svg>
    <!-- DBeaver -->
    <svg class="w-[112px] h-[136px]" viewBox="0 0 112 136"><circle cx="56" cy="64" r="52" fill="#fff"/><path d="M31 32q11 3 10 20l2 38q-21-14-26-47-1-12 14-11zM52 32q14-12 22-4 10 1 10 12 0 11-4 16 7 19 4 42 2 8-8 8H56q-17-3-12-38 2-19 11-24-8-3-3-12z" fill="#35241e"/><path d="M56 45q10-14 18 0 8-2 8 3-3 9-13 9-12 8-11 24 2 9 4 18-12-6-12-26 2-19 6-28z" fill="#84715f"/><path d="M52 53q-1-17 17-21M58 54q-11 15-11 43" fill="none" stroke="#fff" stroke-width="2.500"/><circle cx="56" cy="128" r="4" fill="#6d6d6d"/></svg>
    <!-- Burp Suite -->
    <svg class="w-[112px] h-[136px]" viewBox="0 0 112 136"><path d="M4 25l51-10v97L4 102z" fill="#424242"/><path d="M57 15l51 10v77l-51 10z" fill="#e86f45"/><path d="M83 27v13L67 57h16v14h17L83 88v11" fill="none" stroke="#fff" stroke-width="5"/><circle cx="56" cy="128" r="4" fill="#6d6d6d"/></svg>
    <!-- Chromium -->
    <svg class="w-[112px] h-[136px]" viewBox="0 0 112 136"><circle cx="56" cy="64" r="45.500" fill="#a3c0f4"/><path d="M17.500 40.500A45.500 45.500 0 0 0 56 109.500L74 74 56 64z" fill="#6796ec"/><path d="M17.500 40.500L38 74l18-31h40A45.500 45.500 0 0 0 17.500 40.500z" fill="#4871d0"/><circle cx="56" cy="64" r="21" fill="#f4f4f4"/><circle cx="56" cy="64" r="18" fill="#5689ed"/><circle cx="56" cy="128" r="4" fill="#6d6d6d"/></svg>
    <!-- Calculator -->
    <svg class="w-[112px] h-[136px]" viewBox="0 0 112 136"><g transform="rotate(-8 56 64)"><rect x="22" y="22" width="69" height="86" rx="2" fill="#232a2c"/><rect x="22" y="40" width="53" height="65" fill="#c9cacc"/><rect x="75" y="40" width="16" height="65" fill="#e8862f"/><path d="M22 53h69M22 66h69M22 79h69M22 92h69M39.500 40v52M57 40v65" stroke="#999" stroke-width="1"/><text x="87" y="36" text-anchor="end" fill="#bcc2c3" textLength="47" lengthAdjust="spacingAndGlyphs" class="text-[15px]">3.141593</text><g fill="#555" text-anchor="middle" class="text-[8px]"><text x="31" y="50">AC</text><text x="48" y="50">⁺∕₋</text><text x="66" y="50">%</text><text x="31" y="63">7</text><text x="48" y="63">8</text><text x="66" y="63">9</text><text x="31" y="76">4</text><text x="48" y="76">5</text><text x="66" y="76">6</text><text x="31" y="89">1</text><text x="48" y="89">2</text><text x="66" y="89">3</text><text x="31" y="102">0</text><text x="66" y="102">.</text></g><g fill="#fbd9b5" text-anchor="middle" class="text-[10px]"><text x="83" y="50">÷</text><text x="83" y="63">×</text><text x="83" y="76">−</text><text x="83" y="89">+</text><text x="83" y="102">=</text></g></g><circle cx="56" cy="128" r="4" fill="#6d6d6d"/></svg>
    <div class="w-[50px] flex items-center justify-center"><i class="w-[2px] h-[100px] bg-[#a5a6a7]"></i></div>
    <!-- Folder window -->
    <svg class="w-[112px] h-[136px]" viewBox="0 0 112 136"><path d="M16 45V29q0-3 4-3l2-4h18l4 6h48q3 0 3 4v14z" fill="#70bfe9"/><path d="M16 45l2-12h20l5 4h52v9z" fill="#92d4f4"/><rect x="12" y="43" width="88" height="51" fill="#fff"/><rect x="16" y="47" width="80" height="43" fill="#f5f5f5" stroke="#ccc" stroke-width="1"/><path d="M17 66h78" stroke="#ccc" stroke-width="2"/><path d="M20 50h12M20 54h9M22 58h10M20 62h9M74 50h14M74 56h17" stroke="#aaa" stroke-width="1"/><path d="M38 51h10M38 56h14M38 61h13" stroke="#d6bb88" stroke-width="2"/></svg>
    <!-- Minimised editor -->
    <svg class="w-[112px] h-[136px]" viewBox="0 0 112 136"><rect x="7" y="36" width="98" height="55" fill="#282822"/><path d="M7 36.500h98" stroke="#888"/><path d="M10 40h18M10 43h14M10 46h20M10 49h58M10 52h76M10 57h34M10 62h24" stroke="#5a5a52" stroke-width="1"/><rect x="70" y="78" width="34" height="34" rx="3" fill="#464646"/><path d="M77 88l20-6v7l-8 3 8 3v7l-20 6v-7l8-3-8-3z" fill="#ee9b37"/></svg>
    <!-- Trash -->
    <svg class="w-[112px] h-[136px]" viewBox="0 0 112 136"><defs><linearGradient id="tr"><stop stop-color="#cfcfcf"/><stop offset=".3" stop-color="#f3f3f3"/><stop offset=".75" stop-color="#e8e8e8"/><stop offset="1" stop-color="#c6c6c6"/></linearGradient></defs><path d="M18 32l7 68q5 11 31 11t29-11l7-68z" fill="url(#tr)"/><ellipse cx="55" cy="32" rx="37" ry="10" fill="#d4d4d4" stroke="#f8f8f8" stroke-width="2"/><path d="M23 27l18-12 12 8 10-9 13 10 11 6-8 8-24 3-24-4z" fill="#e4e4e4"/><path d="M32 22l8-4-2 6zM36 33l9-3 3 7zM66 21l5-4 3 8zM64 31l8-2-4 8zM77 30l6-1-5 5z" fill="#666"/><path d="M44 27l8-2-1 5z" fill="#32b48d"/><path d="M53 34l7-2-4 8z" fill="#cd4b35"/><path d="M68 30l6-3-2 6z" fill="#3560a8"/><path d="M33 52q5 30 7 48M72 52q-6 20-7 48" stroke="#fff" stroke-width="4" fill="none" opacity=".6"/></svg>
  </div>
</div>
</body>
</html>
